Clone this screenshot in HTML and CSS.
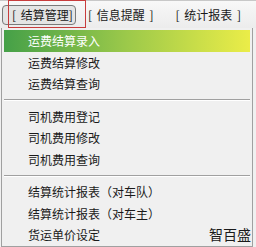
FILE: index.html
```html
<!DOCTYPE html>
<html>
<head>
<meta charset="utf-8">
<link rel="stylesheet" href="styles.css">
</head>
<body>
<div class="menubar">
  <div class="tab active">[ 结算管理]</div>
  <div class="tab">[ 信息提醒 ]</div>
  <div class="tab">[ 统计报表 ]</div>
  <div class="mark"></div>
</div>
<div class="dropdown">
  <div class="item selected">运费结算录入</div>
  <div class="item">运费结算修改</div>
  <div class="item">运费结算查询</div>
  <div class="sep"></div>
  <div class="item">司机费用登记</div>
  <div class="item">司机费用修改</div>
  <div class="item">司机费用查询</div>
  <div class="sep"></div>
  <div class="item">结算统计报表（对车队）</div>
  <div class="item">结算统计报表（对车主）</div>
  <div class="item last">货运单价设定<span class="brand">智百盛</span></div>
</div>
</body>
</html>
```
FILE: styles.css
```css
html, body {
  margin: 0;
  padding: 0;
}
body {
  width: 256px;
  height: 247px;
  background: #f0f0f0;
  font-family: "Noto Sans CJK SC", "Liberation Sans", sans-serif;
  font-size: 12px;
  color: #1a1a1a;
  position: relative;
  overflow: hidden;
}
.menubar {
  height: 28px;
  display: flex;
  align-items: center;
  padding-left: 2px;
  background: linear-gradient(#f8f8f8, #ececec);
  border-top: 1px solid #c8c8c8;
  box-sizing: border-box;
  font-size: 12px;
}
.tab {
  height: 20px;
  line-height: 20px;
  white-space: nowrap;
  word-spacing: 2px;
}
.tab.active {
  width: 74px;
  box-sizing: border-box;
  padding-left: 9px;
  border: 1px solid #7a7a7a;
  border-radius: 4px;
  background: #e4e4e4;
  line-height: 18px;
  height: 20px;
}
.tab:nth-child(2) {
  margin-left: 12px;
}
.tab:nth-child(3) {
  margin-left: 22px;
}
.mark {
  position: absolute;
  left: 8px;
  top: 0;
  width: 78px;
  height: 28px;
  border: 1px solid #c83c3c;
  box-sizing: border-box;
}
.dropdown {
  margin-left: 1px;
  width: 252px;
  height: 219px;
  box-sizing: border-box;
  border: 1px solid #a0a0a0;
  border-top: none;
  background: #f0f0f0;
  padding: 2px 2px 0 2px;
}
.item {
  height: 21.5px;
  line-height: 21px;
  padding-left: 24px;
  white-space: nowrap;
}
.item.selected {
  background: linear-gradient(90deg, #45a048 0%, #9cc94a 50%, #ebed48 100%);
  color: #fff;
}
.sep {
  height: 11px;
  display: flex;
  align-items: center;
}
.sep::before {
  content: "";
  flex: 1;
  height: 1px;
  background: #a0a0a0;
  border-bottom: 1px solid #fff;
}
.item.last {
  display: flex;
  justify-content: space-between;
  padding-right: 0;
}
.brand {
  font-size: 14px;
  margin-right: -1px;
}
```
